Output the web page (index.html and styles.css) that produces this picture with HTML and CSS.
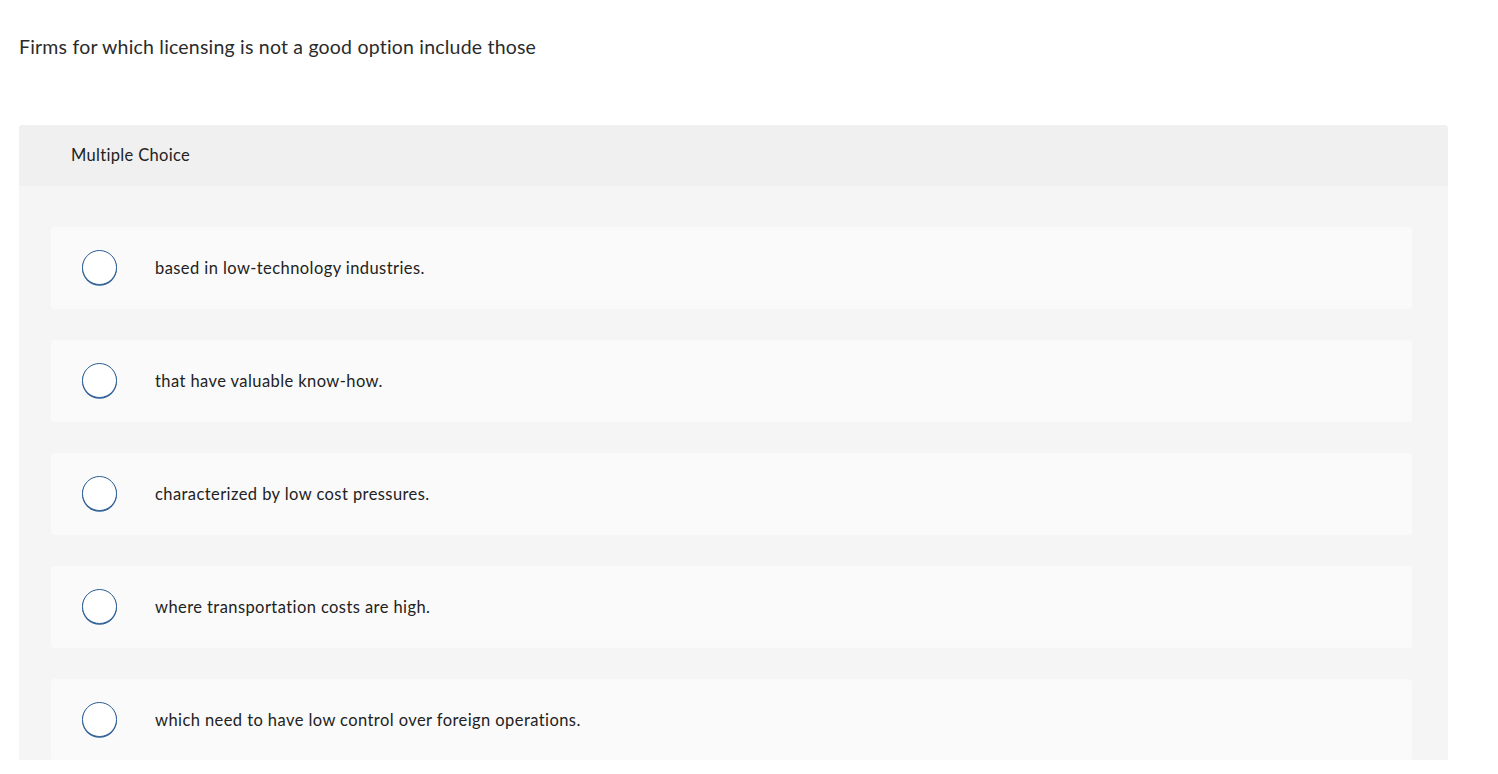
FILE: index.html
```html
<!DOCTYPE html>
<html>
<head>
<meta charset="utf-8">
<link rel="stylesheet" href="styles.css">
</head>
<body>
<div class="page">
  <p class="question">Firms for which licensing is not a good option include those</p>
  <div class="panel">
    <div class="panel-head">Multiple Choice</div>
    <div class="panel-body">
      <div class="option"><span class="radio"></span><span class="label">based in low-technology industries.</span></div>
      <div class="option"><span class="radio"></span><span class="label">that have valuable know-how.</span></div>
      <div class="option"><span class="radio"></span><span class="label">characterized by low cost pressures.</span></div>
      <div class="option"><span class="radio"></span><span class="label">where transportation costs are high.</span></div>
      <div class="option"><span class="radio"></span><span class="label">which need to have low control over foreign operations.</span></div>
    </div>
  </div>
</div>
</body>
</html>
```

FILE: styles.css
```css
html, body {
  margin: 0;
  padding: 0;
  background: #ffffff;
}
body {
  font-family: Lato, "Open Sans", "Liberation Sans", sans-serif;
  color: #222222;
}
.page {
  height: 760px;
  overflow: hidden;
  padding: 0 50px 0 19px;
}
.question {
  margin: 0;
  padding-top: 35px;
  font-size: 19.5px;
  line-height: 24px;
  letter-spacing: 0.2px;
  color: #2b2b2b;
  height: 90px;
}
.panel {
  width: 1429px;
  background: #f5f5f5;
  border-radius: 4px 4px 0 0;
}
.panel-head {
  height: 61px;
  box-sizing: border-box;
  padding: 20px 0 0 52px;
  font-size: 16.5px;
  line-height: 20px;
  letter-spacing: 0.33px;
  background: #f0f0f0;
  border-radius: 4px 4px 0 0;
  color: #222;
}
.panel-body {
  padding: 41px 36px 40px 32px;
  display: flex;
  flex-direction: column;
  gap: 31px;
}
.option {
  height: 82px;
  background: #fafafa;
  border-radius: 4px;
  display: flex;
  align-items: center;
  padding-left: 31px;
}
.radio {
  width: 33px;
  height: 33px;
  border-radius: 50%;
  border: 1.2px solid #2e5f95;
  box-shadow: 0 0.8px 0 #2e5f95;
  background: #ffffff;
  flex: none;
  margin-top: -1px;
}
.label {
  margin-left: 38px;
  font-size: 16.5px;
  line-height: 20px;
  letter-spacing: 0.42px;
  color: #222;
}
```
